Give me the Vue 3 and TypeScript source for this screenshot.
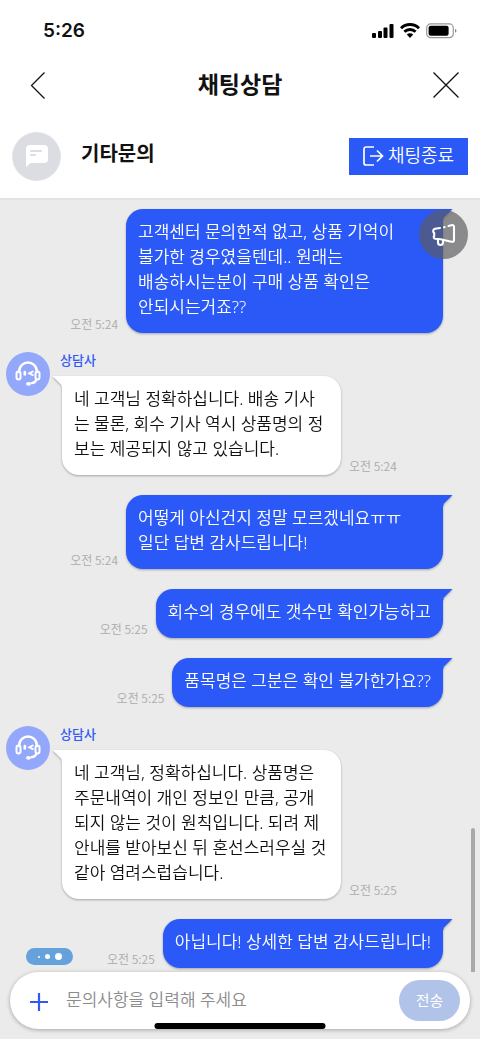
<script setup lang="ts">
import { ref } from 'vue'

interface Message {
  id: number
  from: 'me' | 'agent'
  lines: string[]
  time: string
}

const draft = ref('')

const messages: Message[] = [
  {
    id: 1,
    from: 'me',
    lines: ['고객센터 문의한적 없고, 상품 기억이', '불가한 경우였을텐데.. 원래는', '배송하시는분이 구매 상품 확인은', '안되시는거죠??'],
    time: '오전 5:24',
  },
  {
    id: 2,
    from: 'agent',
    lines: ['네 고객님 정확하십니다. 배송 기사', '는 물론, 회수 기사 역시 상품명의 정', '보는 제공되지 않고 있습니다.'],
    time: '오전 5:24',
  },
  { id: 3, from: 'me', lines: ['어떻게 아신건지 정말 모르겠네요ㅠㅠ', '일단 답변 감사드립니다!'], time: '오전 5:24' },
  { id: 4, from: 'me', lines: ['회수의 경우에도 갯수만 확인가능하고'], time: '오전 5:25' },
  { id: 5, from: 'me', lines: ['품목명은 그분은 확인 불가한가요??'], time: '오전 5:25' },
  {
    id: 6,
    from: 'agent',
    lines: ['네 고객님, 정확하십니다. 상품명은', '주문내역이 개인 정보인 만큼, 공개', '되지 않는 것이 원칙입니다. 되려 제', '안내를 받아보신 뒤 혼선스러우실 것', '같아 염려스럽습니다.'],
    time: '오전 5:25',
  },
  { id: 7, from: 'me', lines: ['아닙니다! 상세한 답변 감사드립니다!'], time: '오전 5:25' },
]
</script>

<template>
  <div class="app">
    <div class="status">
      <span class="clock">5:26</span>
      <div class="status-icons">
        <svg width="22" height="16" viewBox="0 0 22 16" aria-hidden="true">
          <rect x="0" y="10" width="4" height="5" rx="1" />
          <rect x="6" y="8" width="4" height="7" rx="1" />
          <rect x="11.500" y="4.500" width="4" height="10.500" rx="1" />
          <rect x="17.500" y="1" width="4" height="14" rx="1" />
        </svg>
        <svg width="20" height="16" viewBox="0 0 20 16" fill="none" stroke="#000" stroke-width="2.900" aria-hidden="true">
          <path d="M1 5.200a12.800 12.800 0 0 1 18 0" />
          <path d="M4.400 8.800a8 8 0 0 1 11.200 0" />
          <path d="M6.800 11.600a4.600 4.600 0 0 1 6.400 0L10 15z" fill="#000" stroke="none" />
        </svg>
        <svg width="31" height="16" viewBox="0 0 31 16" aria-hidden="true">
          <rect x=".7" y=".9" width="26.600" height="13.800" rx="4" fill="none" stroke="#999" stroke-width="1.200" />
          <rect x="2.600" y="2.800" width="20" height="10" rx="2" />
          <path d="M29 5.800c2 1 2 3 0 4z" fill="#888" />
        </svg>
      </div>
    </div>

    <header class="nav">
      <button class="icon-button" type="button" aria-label="뒤로">
        <svg width="28" height="28" viewBox="0 0 28 28" fill="none" stroke="#111" stroke-width="1.300">
          <path d="M24.500 1.500 11.500 14.500l13 13" />
        </svg>
      </button>
      <h1>채팅상담</h1>
      <button class="icon-button" type="button" aria-label="닫기">
        <svg width="28" height="28" viewBox="0 0 28 28" fill="none" stroke="#111" stroke-width="1.300">
          <path d="m1.500 1.500 25 25m0-25-25 25" />
        </svg>
      </button>
    </header>

    <section class="subject">
      <div class="subject-icon">
        <svg width="24" height="24" viewBox="0 0 24 24" aria-hidden="true">
          <path d="M4 1h15a4 4 0 0 1 4 4v10a4 4 0 0 1-4 4H5.500L1 23V5a4 4 0 0 1 3-4z" fill="#fff" />
          <path d="M6 7h10M6 11h4" stroke="#dcdde3" stroke-width="2" stroke-linecap="round" />
        </svg>
      </div>
      <h2>기타문의</h2>
      <button class="end-button" type="button">
        <svg width="21" height="20" viewBox="0 0 21 20" fill="none" stroke="#fff" stroke-width="1.700" aria-hidden="true">
          <path d="M11 1H3a2 2 0 0 0-2 2v14a2 2 0 0 0 2 2h8M7 10h12.500m-5.500-5.500 5.500 5.500-5.500 5.500" />
        </svg>
        <span>채팅종료</span>
      </button>
    </section>

    <main class="chat">
      <div class="messages">
        <article v-for="m in messages" :key="m.id" class="message" :class="[m.from, { multiline: m.lines.length > 1 }]">
          <div v-if="m.from === 'agent'" class="avatar">
            <svg width="26" height="26" viewBox="0 0 26 26" fill="none" stroke="#fff" stroke-linecap="round" aria-hidden="true">
              <path d="M4 11C4.500-1.700 21.500-1.700 22 11" stroke-width="2.400" />
              <rect x="1.500" y="10.500" width="4" height="8" rx="2" stroke-width="2" />
              <rect x="20.500" y="10.500" width="4" height="8" rx="2" stroke-width="2" />
              <path d="M21.500 18.500c-1 2.700-2.500 3.500-4.800 3.700" stroke-width="2.200" />
              <path d="M9.800 11v2.500" stroke-width="2.600" />
              <path d="m17.800 10.500-3.500 1.800 3.500 1.800" stroke-width="1.900" />
              <ellipse cx="13.500" cy="22.800" rx="2.500" ry="1.900" fill="#fff" stroke="none" />
            </svg>
          </div>
          <div class="content">
            <div v-if="m.from === 'agent'" class="name">상담사</div>
            <div class="row">
              <div class="bubble">
                <svg class="tail" width="10" height="11" viewBox="0 0 10 11" aria-hidden="true">
                  <path d="M0 0h9.500L.5 9V11H0z" />
                </svg>
                <div v-for="line in m.lines" :key="line">{{ line }}</div>
              </div>
              <time>{{ m.time }}</time>
            </div>
          </div>
        </article>
      </div>
      <button class="notice" type="button" aria-label="공지">
        <svg width="24" height="24" viewBox="0 0 24 24" fill="none" stroke="#fff" stroke-width="2.100" stroke-linecap="round" stroke-linejoin="round" aria-hidden="true">
          <path d="M8 5 3 5.700Q1.300 6 1.300 7.500v1.500l.9 1v3l-.5.700q0 1.800 1.500 2l5.500.5 10.600 2.500q2.700.6 2.700-1.800V4q0-2.500-2.700-1.800L16.500 3M12 4.200l.6-.1" />
          <path d="M6 16.500v3a2.500 2.500 0 0 0 5 0V17" />
        </svg>
      </button>
      <div class="typing"><i></i><i></i><i></i></div>
      <div class="scroll-thumb"></div>
    </main>

    <form class="composer" @submit.prevent>
      <button class="add" type="button" aria-label="첨부">
        <svg width="18" height="18" viewBox="0 0 18 18" stroke="#3159f5" stroke-width="2.200"><path d="M9 0v18M0 9h18" /></svg>
      </button>
      <input v-model="draft" type="text" aria-label="문의사항" placeholder="문의사항을 입력해 주세요" />
      <button class="send" type="submit">전송</button>
      <div class="home-bar"></div>
    </form>
  </div>
</template>

<style>
body {
  margin: 0;
}
</style>

<style scoped>
.app {
  box-sizing: border-box;
  display: flex;
  flex-direction: column;
  height: 100vh;
  background: #ebebeb;
  color: #111;
  font-family: "Noto Sans", "Noto Sans CJK KR", sans-serif;
}
button {
  border: 0;
  padding: 0;
  background: none;
  font-family: inherit;
}
svg {
  display: block;
}
h1,
h2 {
  margin: 0;
}
.status {
  box-sizing: border-box;
  display: flex;
  flex: none;
  align-items: center;
  justify-content: space-between;
  height: 57px;
  padding: 4px 23px 0 43px;
  background: #fff;
}
.clock {
  font: 600 19px/24px Inter, sans-serif;
}
.status-icons {
  display: flex;
  gap: 6px;
}
.nav {
  display: flex;
  flex: none;
  align-items: center;
  justify-content: space-between;
  height: 56px;
  padding: 0 20px;
  background: #fff;
}
.nav h1 {
  padding-bottom: 2px;
  font-size: 23px;
  font-weight: 700;
  line-height: 32px;
}
.subject {
  box-sizing: border-box;
  display: flex;
  flex: none;
  align-items: center;
  height: 85px;
  padding: 1px 12px 0;
  background: #fff;
}
.subject-icon {
  box-sizing: border-box;
  display: grid;
  place-items: center;
  width: 49px;
  height: 49px;
  border: 1px solid #e3e4e6;
  border-radius: 50%;
  background: #dcdde3;
}
.subject h2 {
  flex: 1;
  margin-left: 20px;
  padding-bottom: 4px;
  font-size: 20px;
  font-weight: 700;
  line-height: 28px;
}
.end-button {
  display: flex;
  align-items: center;
  justify-content: center;
  gap: 4px;
  width: 119px;
  height: 37px;
  background: #2a59f8;
  color: #fff;
  font-size: 18px;
  font-weight: 350;
}
.end-button span {
  padding-bottom: 2px;
  line-height: 24px;
}
.chat {
  position: relative;
  flex: 1;
  min-height: 0;
  overflow: hidden;
  box-shadow: inset 0 2px 1px #e3e3e3;
}
.messages {
  padding: 11px 37px 0 6px;
}
.message {
  display: flex;
  gap: 10px;
  margin-bottom: 20px;
}
.message.me {
  justify-content: flex-end;
}
.message.agent {
  margin-top: -1px;
}
.avatar {
  display: grid;
  flex: none;
  place-items: center;
  width: 44px;
  height: 44px;
  border-radius: 50%;
  background: #93a8fb;
}
.name {
  height: 24px;
  color: #3159f5;
  font-size: 13px;
  font-weight: 500;
  line-height: 16px;
}
.row {
  display: flex;
  align-items: flex-end;
  gap: 8px;
}
.me .row {
  flex-direction: row-reverse;
}
.bubble {
  position: relative;
  box-sizing: border-box;
  padding: 10px 12px 14px;
  font-size: 17px;
  font-weight: 350;
  line-height: 25px;
  white-space: nowrap;
  filter: drop-shadow(0 1px 1px rgba(0, 0, 0, 0.3));
}
.me .bubble {
  border-radius: 17px 0 17px 17px;
  background: #2a59f8;
  color: #fff;
}
.me.multiline .bubble {
  min-width: 317px;
}
.agent .bubble {
  min-width: 279px;
  margin-left: 2px;
  border-radius: 0 17px 17px 17px;
  background: #fff;
}
.tail {
  position: absolute;
  top: 0;
  left: 100%;
  fill: #2a59f8;
}
.agent .tail {
  right: 100%;
  left: auto;
  fill: #fff;
  transform: scaleX(-1);
}
time {
  color: #aaa;
  font-family: "Noto Sans CJK KR", sans-serif;
  font-size: 12px;
  font-weight: 350;
  line-height: 18px;
}
.notice {
  position: absolute;
  top: 12px;
  right: 12px;
  display: grid;
  place-items: center;
  width: 49px;
  height: 49px;
  border-radius: 50%;
  background: rgba(92, 92, 96, 0.68);
}
.typing {
  position: absolute;
  bottom: 7px;
  left: 26px;
  display: flex;
  align-items: center;
  justify-content: center;
  gap: 5px;
  width: 47px;
  height: 17px;
  border-radius: 9px;
  background: #65a2dc;
}
.typing i {
  width: 2px;
  height: 2px;
  border-radius: 50%;
  background: #fff;
}
.typing i:nth-child(2) {
  width: 5px;
  height: 5px;
}
.typing i:nth-child(3) {
  width: 7px;
  height: 7px;
}
.scroll-thumb {
  position: absolute;
  right: 5px;
  bottom: 0;
  width: 4px;
  height: 144px;
  border-radius: 2px 2px 0 0;
  background: #a9a9a9;
}
.composer {
  position: relative;
  box-sizing: border-box;
  display: flex;
  flex: none;
  align-items: center;
  height: 57px;
  margin: 0 10px 10px;
  padding: 0 10px 0 20px;
  border-radius: 29px;
  background: #fff;
  box-shadow: 0 1px 4px rgba(0, 0, 0, 0.3);
}
.add {
  margin-top: 2px;
}
.composer input {
  flex: 1;
  min-width: 0;
  height: 32px;
  margin: 0 0 2px 18px;
  padding: 0;
  border: 0;
  outline: 0;
  background: none;
  color: #222;
  font-family: inherit;
  font-size: 17px;
  font-weight: 350;
}
.composer input::placeholder {
  color: #8c8c8c;
  opacity: 1;
}
.send {
  width: 61px;
  height: 41px;
  padding-bottom: 2px;
  border-radius: 21px;
  background: #b1c3e8;
  color: #fff;
  font-size: 15px;
}
.home-bar {
  position: absolute;
  bottom: 0;
  left: 50%;
  width: 171px;
  height: 6px;
  border-radius: 3px;
  background: #000;
  transform: translateX(-50%);
}
</style>
